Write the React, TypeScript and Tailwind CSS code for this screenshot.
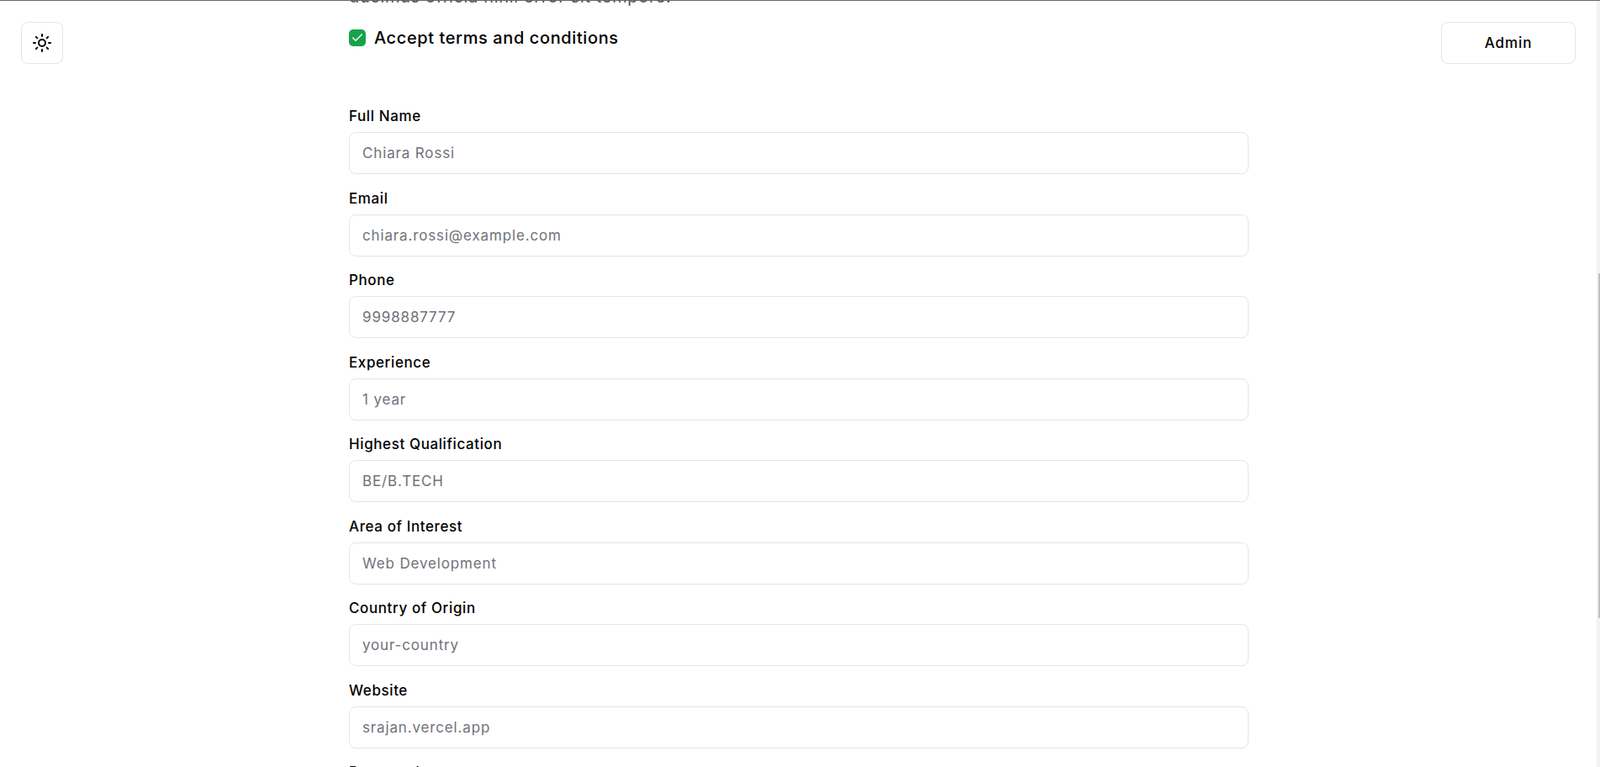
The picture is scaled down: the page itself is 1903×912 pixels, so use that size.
import React from 'react';
import { Sun, Check } from 'lucide-react';

const fields = [
  { label: 'Full Name', placeholder: 'Chiara Rossi' },
  { label: 'Email', placeholder: 'chiara.rossi@example.com' },
  { label: 'Phone', placeholder: '9998887777' },
  { label: 'Experience', placeholder: '1 year' },
  { label: 'Highest Qualification', placeholder: 'BE/B.TECH' },
  { label: 'Area of Interest', placeholder: 'Web Development' },
  { label: 'Country of Origin', placeholder: 'your-country' },
  { label: 'Website', placeholder: 'srajan.vercel.app' },
];

const Field: React.FC<{ label: string; placeholder: string }> = ({ label, placeholder }) => {
  return (
    <div className="mb-[15.5px]">
      <label className="block h-6 mb-2 text-[17px] leading-[26px] font-medium text-black tracking-[0.6px]">{label}</label>
      <input
        type="text"
        placeholder={placeholder}
        className="block w-full h-[50px] px-[15px] rounded-lg border border-[#e5e5e5] bg-white text-[17px] tracking-[0.85px] placeholder:text-[#71717a] outline-none"
      />
    </div>
  );
};

export default function App() {
  return (
    <div className="relative h-[912px] overflow-hidden bg-white border-t border-[#666666] font-[Inter,sans-serif]">
      <div className="flex">
        <div className="w-[415px] pl-[25px] pt-[25px]">
          <button className="flex items-center justify-center w-[50px] h-[50px] rounded-lg border border-[#e5e5e5] bg-white text-black">
            <Sun size={24} strokeWidth={2} />
          </button>
        </div>

        <div className="w-[1070px]">
          <p className="-mt-[17px] h-6 text-[20px] leading-6 text-[#52525b] tracking-[0.65px] whitespace-nowrap">
            ducimus officia nihil error sit tempore.
          </p>
          <div className="mt-[27px] flex items-center gap-[10px] h-5">
            <span className="flex items-center justify-center w-5 h-5 rounded-[5px] bg-[#16a34a] text-white">
              <Check size={16} strokeWidth={2} />
            </span>
            <span className="text-xl leading-7 font-medium text-black tracking-[0.6px]">Accept terms and conditions</span>
          </div>
          <div className="mt-[70px]">
            {fields.map((f) => (
              <Field key={f.label} label={f.label} placeholder={f.placeholder} />
            ))}
            <label className="block h-6 text-[17px] leading-[26px] font-medium text-black tracking-[0.6px]">Password</label>
          </div>
        </div>

        <div className="flex-1 flex justify-end pr-[29px] pt-[25px]">
          <button className="w-40 h-[50px] pt-[2px] rounded-lg border border-[#e5e5e5] bg-white text-[17px] font-medium text-black tracking-[0.9px]">
            Admin
          </button>
        </div>
      </div>

      <div className="absolute right-0 top-0 bottom-0 w-1 bg-[#f3f3f3]">
        <div className="ml-[2px] mt-[324px] h-[410px] w-[2px] bg-[#c1c1c1]" />
      </div>
    </div>
  );
}
